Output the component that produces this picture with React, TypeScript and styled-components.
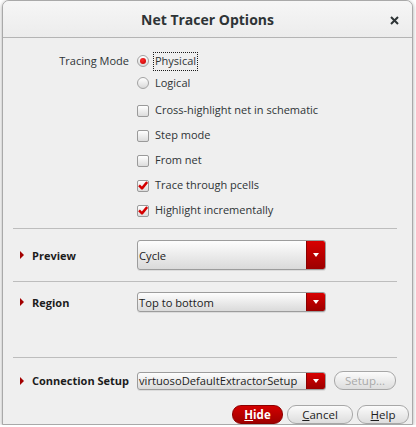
import React from "react"
import styled, { createGlobalStyle } from "styled-components"

const GlobalStyle = createGlobalStyle`
  body {
    margin: 0;
    background: #ffffff;
  }
`

const Window = styled.div`
  box-sizing: border-box;
  width: 411px;
  height: 425px;
  margin-left: 2px;
  display: flex;
  flex-direction: column;
  background: #efefef;
  border: 1px solid #a9a9a9;
  border-radius: 7px 7px 0 0;
  box-shadow: 0 1px 4px rgba(0, 0, 0, 0.35);
  overflow: hidden;
  font-family: "Open Sans", "Noto Sans", sans-serif;
  font-size: 11px;
  color: #2e3436;
`

const TitleBar = styled.div`
  height: 36px;
  flex: none;
  display: grid;
  grid-template-columns: 1fr auto 1fr;
  align-items: center;
  background: linear-gradient(#f6f6f6, #ececec);
  border-bottom: 1px solid #b4b4b4;
`

const Title = styled.div`
  grid-column: 2;
  font-size: 14px;
  font-weight: 700;
  color: #2e3436;
`

const CloseButton = styled.div`
  grid-column: 3;
  justify-self: end;
  margin: 2px 13px 0 0;
  display: flex;
`

const TopSection = styled.div`
  flex: none;
  display: grid;
  grid-template-columns: 126px 1fr;
  column-gap: 8px;
  padding: 12px 0 5px;
`

const FieldLabel = styled.div`
  text-align: right;
  line-height: 22px;
`

const Options = styled.div`
  display: flex;
  flex-direction: column;
`

const RadioRow = styled.div`
  height: 22px;
  display: flex;
  align-items: center;
`

const CheckGroup = styled.div`
  margin-top: 4px;
  display: flex;
  flex-direction: column;
`

const CheckRow = styled.div`
  height: 25px;
  display: flex;
  align-items: center;
`

const Radio = styled.span<{ $checked?: boolean }>`
  box-sizing: border-box;
  width: 12px;
  height: 12px;
  border-radius: 50%;
  border: 1px solid #a2a2a2;
  background: linear-gradient(#ffffff, #d9d9d9);
  display: flex;
  align-items: center;
  justify-content: center;
  &::after {
    content: "";
    display: ${(p) => (p.$checked ? "block" : "none")};
    width: 6px;
    height: 6px;
    border-radius: 50%;
    background: radial-gradient(circle at 40% 35%, #ff2a2a, #c00000);
  }
`

const Box = styled.span`
  box-sizing: border-box;
  width: 12px;
  height: 12px;
  border: 1px solid #9a9a9a;
  border-radius: 2px;
  background: linear-gradient(#ffffff, #dcdcdc);
  display: flex;
  align-items: center;
  justify-content: center;
`

const OptionText = styled.span<{ $focused?: boolean }>`
  margin-left: 4px;
  padding: 1px 1px 2px;
  border: 1px dotted ${(p) => (p.$focused ? "#1a1a1a" : "transparent")};
  line-height: 14px;
`

const Separator = styled.div`
  height: 1px;
  flex: none;
  margin: 0 15px 0 10px;
  background: #bdbdbd;
`

const ExpanderSection = styled.div<{ $height: number; $top: number }>`
  height: ${(p) => p.$height}px;
  box-sizing: border-box;
  flex: none;
  padding-top: ${(p) => p.$top}px;
`

const ExpanderRow = styled.div`
  display: flex;
  align-items: center;
`

const ExpanderHead = styled.div`
  width: 134px;
  box-sizing: border-box;
  padding-left: 17px;
  display: flex;
  align-items: center;
  gap: 8px;
  font-weight: 700;
  color: #1c1c1c;
`

const Arrow = styled.span`
  width: 0;
  height: 0;
  border-top: 4px solid transparent;
  border-bottom: 4px solid transparent;
  border-left: 4px solid #a30000;
`

const Combo = styled.div<{ $height: number }>`
  box-sizing: border-box;
  width: 189px;
  height: ${(p) => p.$height}px;
  display: flex;
  border: 1px solid #9c9c9c;
  border-radius: 3px;
  overflow: hidden;
  background: linear-gradient(#fdfdfd, #dadada);
  box-shadow: 0 1px 0 rgba(0, 0, 0, 0.08);
`

const ComboText = styled.span`
  flex: 1;
  padding-left: 1px;
  display: flex;
  align-items: center;
  color: #1c1c1c;
  font-size: 11.2px;
  white-space: nowrap;
`

const ComboButton = styled.span`
  width: 18px;
  flex: none;
  display: flex;
  align-items: center;
  justify-content: center;
  background: linear-gradient(#d80000, #9c0000);
  border-left: 1px solid #8a0000;
  &::after {
    content: "";
    border-left: 3px solid transparent;
    border-right: 3px solid transparent;
    border-top: 4px solid #ffffff;
  }
`

const PillButton = styled.div<{ $variant?: "primary" | "normal" | "disabled"; $width: number }>`
  box-sizing: border-box;
  width: ${(p) => p.$width}px;
  height: 19px;
  border-radius: 9px;
  display: flex;
  align-items: center;
  justify-content: center;
  font-size: 11.5px;
  border: 1px solid ${(p) => (p.$variant === "primary" ? "#8c0000" : "#a7a7a7")};
  background: ${(p) =>
    p.$variant === "primary"
      ? "linear-gradient(#d40000, #9e0000)"
      : "linear-gradient(#fbfbfb, #dddddd)"};
  color: ${(p) =>
    p.$variant === "primary" ? "#ffffff" : p.$variant === "disabled" ? "#a9a9a9" : "#1c1c1c"};
  font-weight: ${(p) => (p.$variant === "primary" ? 700 : 400)};
  u {
    text-decoration-thickness: 1px;
  }
`

const SetupButton = styled(PillButton)`
  margin-left: 8px;
`

const ButtonBar = styled.div`
  margin-top: auto;
  padding: 0 3px 0 0;
  display: flex;
  justify-content: flex-end;
  gap: 4px;
`

const checks = [
  { label: "Cross-highlight net in schematic", on: false },
  { label: "Step mode", on: false },
  { label: "From net", on: false },
  { label: "Trace through pcells", on: true },
  { label: "Highlight incrementally", on: true },
]

const CheckMark: React.FC = () => (
  <svg width="10" height="9" viewBox="0 0 10 9">
    <path d="M1 4.4 L4 7.4 L9.2 1" fill="none" stroke="#d40000" strokeWidth="2.5" strokeLinejoin="round" />
  </svg>
)

const App: React.FC = () => {
  return (
    <>
      <GlobalStyle />
      <Window>
        <TitleBar>
          <Title>Net Tracer Options</Title>
          <CloseButton>
            <svg width="9" height="9" viewBox="0 0 9 9">
              <path d="M1 1 L8 8 M8 1 L1 8" stroke="#2e3436" strokeWidth="2" />
            </svg>
          </CloseButton>
        </TitleBar>

        <TopSection>
          <FieldLabel>Tracing Mode</FieldLabel>
          <Options>
            <RadioRow>
              <Radio $checked />
              <OptionText $focused>Physical</OptionText>
            </RadioRow>
            <RadioRow>
              <Radio />
              <OptionText>Logical</OptionText>
            </RadioRow>
            <CheckGroup>
              {checks.map((c) => (
                <CheckRow key={c.label}>
                  <Box>{c.on && <CheckMark />}</Box>
                  <OptionText>{c.label}</OptionText>
                </CheckRow>
              ))}
            </CheckGroup>
          </Options>
        </TopSection>

        <Separator />
        <ExpanderSection $height={52} $top={11}>
          <ExpanderRow>
            <ExpanderHead>
              <Arrow />
              Preview
            </ExpanderHead>
            <Combo $height={30}>
              <ComboText>Cycle</ComboText>
              <ComboButton />
            </Combo>
          </ExpanderRow>
        </ExpanderSection>

        <Separator />
        <ExpanderSection $height={75} $top={10}>
          <ExpanderRow>
            <ExpanderHead>
              <Arrow />
              Region
            </ExpanderHead>
            <Combo $height={20}>
              <ComboText>Top to bottom</ComboText>
              <ComboButton />
            </Combo>
          </ExpanderRow>
        </ExpanderSection>

        <Separator />
        <ExpanderSection $height={47} $top={13}>
          <ExpanderRow>
            <ExpanderHead>
              <Arrow />
              Connection Setup
            </ExpanderHead>
            <Combo $height={18}>
              <ComboText>virtuosoDefaultExtractorSetup</ComboText>
              <ComboButton />
            </Combo>
            <SetupButton $variant="disabled" $width={62}>
              Setup...
            </SetupButton>
          </ExpanderRow>
        </ExpanderSection>

        <ButtonBar>
          <PillButton $variant="primary" $width={51}>
            <span>
              <u>H</u>ide
            </span>
          </PillButton>
          <PillButton $width={66}>
            <span>
              <u>C</u>ancel
            </span>
          </PillButton>
          <PillButton $width={52}>
            <span>
              <u>H</u>elp
            </span>
          </PillButton>
        </ButtonBar>
      </Window>
    </>
  )
}

export default App
